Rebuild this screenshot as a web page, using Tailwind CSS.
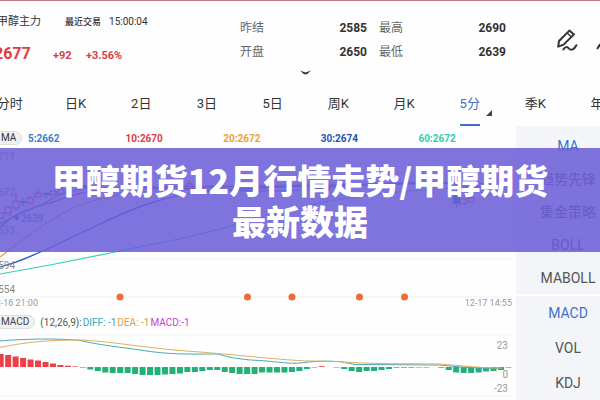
<!DOCTYPE html>
<html lang="zh-CN">
<head>
  <meta charset="UTF-8"/>
  <meta name="viewport" content="width=device-width, initial-scale=1.0"/>
  <title>甲醇期货行情</title>
  <script src="https://cdn.jsdelivr.net/npm/@tailwindcss/browser@4"></script>
</head>
<body class="relative overflow-x-hidden border-t border-[#bf7d86] bg-[#fefefe] font-['Roboto','Noto_Sans_CJK_SC',sans-serif] text-[#333]">

  <!-- quote header -->
  <header class="flex pt-[15px] overflow-hidden">
    <div class="w-[40%] shrink-0 whitespace-nowrap">
      <div class="flex h-3 items-center leading-3">
        <h2 class="-ml-[3px] text-[11px]">甲醇主力</h2>
        <span class="ml-6 text-[9px] font-medium">最近交易</span>
        <span class="ml-2 text-[10px]">15:00:04</span>
      </div>
      <div class="mt-3 flex h-7 items-center font-bold text-[#dc3c44]">
        <span class="-ml-[6px] w-[59px] text-base">2677</span>
        <span class="w-[33px] text-[11px] pt-1">+92</span>
        <span class="text-[11px] pt-1">+3.56%</span>
      </div>
    </div>
    <div class="w-[45%] shrink-0">
      <dl class="grid grid-cols-2 gap-x-3 text-xs leading-6 mr-1">
        <div class="flex justify-between"><dt class="text-[#666]">昨结</dt><dd class="font-bold">2585</dd></div>
        <div class="flex justify-between"><dt class="text-[#666]">最高</dt><dd class="font-bold">2690</dd></div>
        <div class="flex justify-between"><dt class="text-[#666]">开盘</dt><dd class="font-bold">2650</dd></div>
        <div class="flex justify-between"><dt class="text-[#666]">最低</dt><dd class="font-bold">2639</dd></div>
      </dl>
      <button aria-label="展开" class="ml-[60px] flex h-4 items-center">
        <svg class="h-[5px] w-[11px]" viewBox="0 0 11 5"><path d="M0 .5 5.5 2.4 11 .5 7 4.2H4z" fill="#333"/></svg>
      </button>
    </div>
    <div class="flex flex-1 items-start pt-[13px] pl-[46px]">
      <button aria-label="画线" class="shrink-0">
        <svg class="h-6 w-6" viewBox="0 0 24 24" fill="none" stroke="#333" stroke-width="2" stroke-linejoin="round">
          <path d="M2.2 17.6 3 12 13.4 1.6 18 5.4 7.6 15.6z"/>
          <path d="M11.4 4.2 15.2 7.8" stroke-width="1.4"/>
          <path d="M7.4 20.4C9.4 17.6 11 17.4 13 19.6 15.4 22 18 20.6 20.4 16.2" stroke-linecap="round"/>
        </svg>
      </button>
      <button aria-label="更多" class="ml-4 shrink-0">
        <svg class="h-6 w-6" viewBox="0 0 24 24" fill="none" stroke="#333" stroke-width="2"><path d="M1 20 6 13M2 17h6"/></svg>
      </button>
    </div>
  </header>

  <!-- period tabs -->
  <div class="overflow-hidden">
    <nav class="-ml-[23px] -mr-[34px] grid h-[46px] grid-cols-10 justify-items-center text-[13px]">
      <button class="pt-[2px]">分时</button>
      <button class="pt-[2px]">日K</button>
      <button class="pt-[2px]">2日</button>
      <button class="pt-[2px]">3日</button>
      <button class="pt-[2px]">5日</button>
      <button class="pt-[2px]">周K</button>
      <button class="pt-[2px]">月K</button>
      <button class="relative border-b-2 border-[#3f6fc4] pt-1 text-[#3f6fc4]">5分
        <svg class="absolute -right-3 bottom-2 h-[6px] w-[6px]" viewBox="0 0 6 6"><path d="M6 0v6H0z" fill="#444"/></svg>
      </button>
      <button class="pt-[2px]">季K</button>
      <button class="pt-[2px]">年K</button>
    </nav>
  </div>

  <div class="flex">
    <main class="min-w-0 flex-1 overflow-hidden">
      <div class="flex h-[22px] items-center pt-[2px] text-[10px] font-bold">
        <span class="-ml-2 w-[30px] rounded-full border border-[#ddd] bg-[#f1f1f1] pl-2 font-normal leading-3">MA</span>
        <div class="ml-[6px] grid flex-1 grid-cols-5">
          <span class="text-[#3d7cc9]">5:2662</span>
          <span class="text-[#dc3c44]">10:2670</span>
          <span class="text-[#e8a23c]">20:2672</span>
          <span class="text-[#2450b8]">30:2674</span>
          <span class="text-[#2fcfae]">60:2672</span>
        </div>
      </div>

      <!-- price chart -->
      <svg class="block w-full" viewBox="0 0 516 164" fill="none">
        <path d="M0 6H512M0 58H512M0 111H512M0 149H512" stroke="#f0f0f0"/>
        <g stroke-width="1.2">
          <path d="M0 126 50 117 115 104C150 96 170 94 200 86L320 55C360 47 400 43 450 40L516 40" stroke="#35cdb5"/>
          <path d="M0 119C20 114 26 110 45 102L100 76C140 57 160 50 200 44 260 38 350 37 456 35L490 36" stroke="#2450c8"/>
          <path d="M0 109C30 86 50 70 80 57 110 46 150 42 200 40 300 35 380 36 456 35" stroke="#e0a040"/>
          <path d="M0 80C12 66 30 60 50 55 75 46 80 44 110 41 180 36 300 40 380 36L456 34 500 42" stroke="#c0408c"/>
          <path d="M0 76C16 66 30 62 45 55 55 48 70 42 90 40 160 38 240 46 300 42 380 34 440 32 462 38L500 42" stroke="#3d8cc9"/>
        </g>
        <g stroke="#dc3c44">
          <path d="M-2 65h6v5h-6zM5 59h6v6h-6zM13 53h6v7h-6zM16 53V45M16 60v3M27 50h6v5h-6zM30 50v-2M35 45h6v4h-6zM38 45v-3M50 43h6v4h-6zM58 41h6v5h-6zM61 41v-3M186 36h6v5h-6zM189 36v-4M460 51h6v5h-6zM468 50h6v4h-6zM471 50v-3M482 44h6v4h-6zM490 42h6v4h-6z"/>
        </g>
        <g fill="#1b9a9a">
          <path d="M20 53h6v2h-6zM22.500 50h1v8h-1zM43 45h6v2h-6zM45.500 44h1v6h-1zM81 37h6v3h-6zM318 34h6v12h-6zM324 38h6v5h-6zM453 45h7v11h-7zM456 42h1v17h-1z"/>
        </g>
        <path d="M7 66 16 70" stroke="#777"/>
        <circle cx="17" cy="70" r="2" fill="#2450b8"/>
        <g fill="#888" font-size="10">
          <text x="21" y="74" fill="#666">2639</text>
          <text x="15" y="12" text-anchor="end">2711</text>
          <text x="15" y="48" text-anchor="end">2672</text>
          <text x="15" y="86" text-anchor="end">2633</text>
          <text x="15" y="121" text-anchor="end">2594</text>
          <text x="15" y="145" text-anchor="end">2554</text>
        </g>
        <g fill="#999" font-size="9" text-anchor="end">
          <text x="38" y="158">12-16 21:00</text>
          <text x="512" y="158">12-17 14:55</text>
        </g>
        <g fill="#ec6c32">
          <circle cx="120" cy="149" r="3.500"/>
          <circle cx="247.500" cy="149" r="3.500"/>
          <circle cx="292" cy="149" r="3.500"/>
          <circle cx="359.500" cy="149" r="3.500"/>
          <circle cx="404.500" cy="149" r="3.500"/>
        </g>
      </svg>

      <div class="flex h-5 items-center gap-px whitespace-nowrap text-[10px] text-[#555]">
        <span class="-ml-2 mr-1 rounded-full border border-[#ddd] bg-[#f1f1f1] pl-2 pr-[5px] leading-3 text-[#444]">MACD</span>
        <span>(12,26,9):</span>
        <span class="text-[#35a9b5]">DIFF: -1</span>
        <span class="text-[#e0a040]">DEA: -1</span>
        <span class="text-[#c840d8]">MACD:-1</span>
      </div>

      <!-- macd chart -->
      <svg class="block w-full" viewBox="0 0 516 68" fill="none">
        <path d="M0 3H512M0 64H512" stroke="#f5f5f5"/>
        <g id="macdBars"></g>
        <path d="M0 9C20 7 60 6 80 8.500 105 14 120 15 140 18 170 23 190 22 218 22 230 26 245 28 260 28.500 280 30 290 32 300 31 315 29 325 29 340 29.500L355 32.500 440 33C460 35 480 37 502 36" stroke="#4aa9bc"/>
        <path d="M0 15.500C25 10 50 8 80 8 110 9 150 17 200 20 250 24 280 28 310 29 340 29 350 31 380 31.500L440 32C465 34 480 36 502 36" stroke="#ddb060"/>
        <g fill="#999" font-size="10" text-anchor="end">
          <text x="508" y="17">23</text>
          <text x="508" y="46">0</text>
          <text x="508" y="60">-23</text>
        </g>
      </svg>
    </main>

    <!-- indicator picker -->
    <aside class="w-[84px] shrink-0 whitespace-nowrap bg-[#f3f5f8] text-sm text-[#555]">
      <div class="grid h-[170px] grid-rows-5 border-b-2 border-white pl-5 pt-[3px]">
        <button class="text-[#3a74cc]">MA</button>
        <button>趋势先锋</button>
        <button>集金策略</button>
        <button>BOLL</button>
        <button>MABOLL</button>
      </div>
      <div class="grid h-[104px] grid-rows-3 pl-5">
        <button class="text-[#3a74cc]">MACD</button>
        <button>VOL</button>
        <button>KDJ</button>
      </div>
    </aside>
  </div>

  <!-- headline banner -->
  <div class="absolute inset-x-0 top-[147px] flex h-[104px] items-center justify-center bg-[#6a5cd8]/86 px-10">
    <h1 class="text-center font-['Noto_Sans_CJK_SC',sans-serif] text-[34px] font-black leading-[41px] text-white">甲醇期货12月行情走势/甲醇期货最新数据</h1>
  </div>

  <script>
    const bars = [
      13, 12, 10.5, 9, 7.5, 6.5, 5, 3.5, 2, 1.3, 0.6, -0.6, -2.5, -4, -5.5, -6, -6, -6, -7, -8, -8, -8, -7.5,
      -7, -6.5, -5, -5, -4, -3, -3, -5, -6, -7, -7, -7, -5.5, -5.5, -5.5, -5.5, -5, -4, -2, -0.5, 0.8, 0,
      -0.5, -2, -4, -5, -4, -4, -3, -2, -0.7, -0.7, -0.7, -0.5, -0.5, 0, -0.7, -3, -5.5, -6, -6, -5.5, -4.5, -4, -3, -0.6
    ];
    const group = document.getElementById("macdBars");
    bars.forEach((v, i) => {
      const rect = document.createElementNS("http://www.w3.org/2000/svg", "rect");
      rect.setAttribute("x", i * 7.467 - 2.3);
      rect.setAttribute("y", v > 0 ? 35 - v : 35);
      rect.setAttribute("width", 6);
      rect.setAttribute("height", Math.abs(v));
      rect.setAttribute("fill", v > 0 ? "#ec4048" : "#22b078");
      group.appendChild(rect);
    });
  </script>
</body>
</html>
